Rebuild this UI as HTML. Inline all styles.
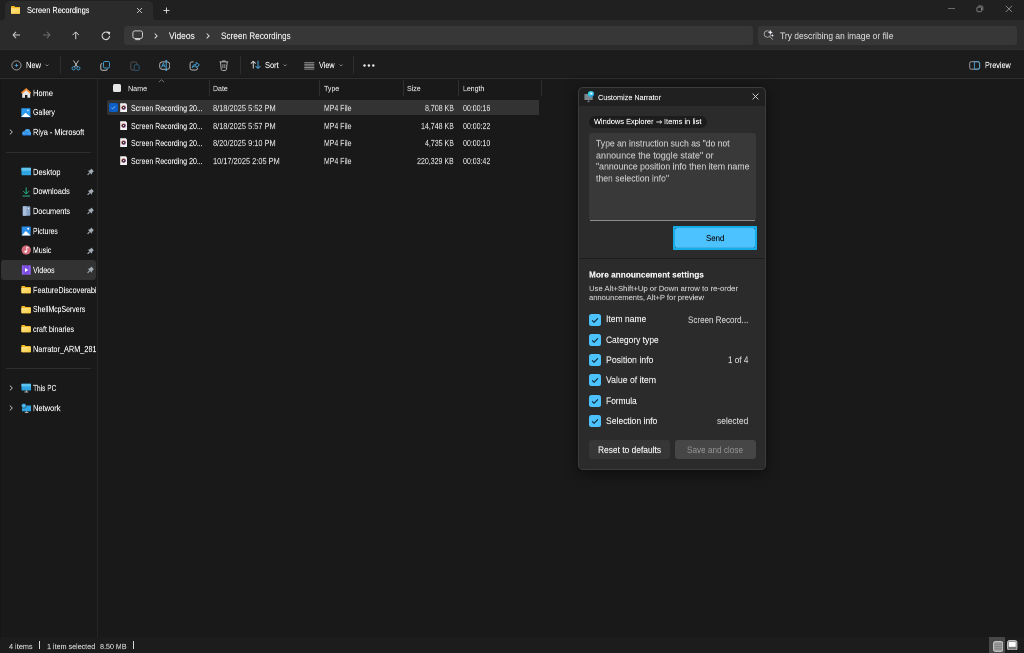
<!DOCTYPE html>
<html><head><meta charset="utf-8"><title>Screen Recordings - File Explorer</title>
<style>
html,body{margin:0;padding:0;width:1024px;height:653px;overflow:hidden;background:#191919;}
body{position:relative;font-family:"Liberation Sans",sans-serif;}
.r{position:absolute;display:block;}
.t{position:absolute;white-space:nowrap;line-height:normal;transform-origin:0 0;will-change:transform;-webkit-text-stroke:0.3px currentColor;}
</style></head><body>
<div class="r" style="left:0px;top:0px;width:1024px;height:50px;background:#2b2b2b;"></div>
<div class="r" style="left:0px;top:0px;width:1024px;height:8px;background:#202020;"></div>
<div class="r" style="left:4.8px;top:0.5px;width:148.2px;height:19.5px;background:#2b2b2b;border-radius:5px 5px 0 0;"></div>
<div class="r" style="left:0px;top:0px;width:4.8px;height:19.5px;background:#202020;border-radius:0 0 3.5px 0;"></div>
<div class="r" style="left:153px;top:0px;width:871px;height:19.5px;background:#202020;border-radius:0 0 0 3.5px;"></div>
<div class="r" style="left:123.8px;top:25.5px;width:629.2px;height:19.799999999999997px;background:#373737;border-radius:3px;"></div>
<div class="r" style="left:758px;top:25.5px;width:259.29999999999995px;height:19.700000000000003px;background:#373737;border-radius:3px;"></div>
<div class="r" style="left:0px;top:48.6px;width:1024px;height:1.6000000000000014px;background:#2f2f2f;"></div>
<div class="r" style="left:0px;top:50.2px;width:1024px;height:27.299999999999997px;background:#1c1c1c;"></div>
<div class="r" style="left:0px;top:77.5px;width:1024px;height:1.0px;background:#2e2e2e;"></div>
<div class="r" style="left:0px;top:78.5px;width:1024px;height:558.5px;background:#191919;"></div>
<div class="r" style="left:97px;top:78.5px;width:1px;height:558.5px;background:#262626;"></div>
<div class="r" style="left:0px;top:78.5px;width:1px;height:558.5px;background:#151515;"></div>
<div class="r" style="left:0px;top:637px;width:1024px;height:16px;background:#1c1c1c;"></div>
<svg class="r" style="left:10.7px;top:5.8px;" width="9.6" height="8" viewBox="0 0 9.6 8"><defs><linearGradient id="fg" x1="0" y1="0" x2="1" y2="1"><stop offset="0" stop-color="#fde48a"/><stop offset="1" stop-color="#f9cd45"/></linearGradient></defs><path d="M0 0.8 Q0 0.1 0.7 0.1 H3.2 L4.3 1.1 H8.8 Q9.4 1.1 9.4 1.8 V7.2 Q9.4 7.8 8.8 7.8 H0.7 Q0 7.8 0 7.2Z" fill="#f4b824"/><path d="M0 2.2 H9.4 V7.2 Q9.4 7.8 8.8 7.8 H0.7 Q0 7.8 0 7.2Z" fill="url(#fg)"/></svg>
<div class="t" style="left:26.60px;top:6.10px;font-size:15.698px;color:#f5f5f5;font-weight:400;transform:scale(0.4682,0.5);">Screen Recordings</div>
<svg class="r" style="left:136px;top:7px;" width="7" height="7" viewBox="0 0 7 7"><path d="M1 1 L6 6 M6 1 L1 6" stroke="#d0d0d0" stroke-width="0.9"/></svg>
<svg class="r" style="left:163px;top:7px;" width="7" height="7" viewBox="0 0 7 7"><path d="M3.5 0.5 V6.5 M0.5 3.5 H6.5" stroke="#e0e0e0" stroke-width="0.9"/></svg>
<div class="r" style="left:948.3px;top:8.2px;width:6.5px;height:0.8000000000000007px;background:#6a6a6a;"></div>
<svg class="r" style="left:976px;top:5px;" width="8" height="8" viewBox="0 0 8 8"><rect x="0.9" y="2.1" width="4.6" height="4.6" rx="0.9" fill="none" stroke="#8a8a8a" stroke-width="0.9"/><path d="M2.2 1.0 H5.6 Q6.8 1.0 6.8 2.2 V5.4" fill="none" stroke="#8a8a8a" stroke-width="0.9"/></svg>
<svg class="r" style="left:1005px;top:5px;" width="8" height="8" viewBox="0 0 8 8"><path d="M0.8 0.8 L7.0 7.0 M7.0 0.8 L0.8 7.0" stroke="#9a9a9a" stroke-width="0.85"/></svg>
<svg class="r" style="left:12.3px;top:31px;" width="9" height="8" viewBox="0 0 9 8"><path d="M0.9 4 H8 M0.9 4 L4.1 0.8 M0.9 4 L4.1 7.2" stroke="#cfcfcf" stroke-width="1.05" fill="none"/></svg>
<svg class="r" style="left:42px;top:31px;transform:scaleX(-1);" width="9" height="8" viewBox="0 0 9 8"><path d="M0.9 4 H8 M0.9 4 L4.1 0.8 M0.9 4 L4.1 7.2" stroke="#6e6e6e" stroke-width="1.05" fill="none"/></svg>
<svg class="r" style="left:71.6px;top:31px;" width="8" height="8.5" viewBox="0 0 8 8.5"><path d="M3.75 8.2 V1 M3.75 0.9 L0.6 4.1 M3.75 0.9 L6.9 4.1" stroke="#d4d4d4" stroke-width="1" fill="none"/></svg>
<svg class="r" style="left:100.5px;top:30.5px;" width="10" height="10" viewBox="0 0 10 10"><path d="M8.6 4.9 A3.75 3.75 0 1 1 6.9 1.7" stroke="#d8d8d8" stroke-width="1.05" fill="none"/><path d="M5.6 0.4 L9.3 0.9 L8.4 4.3Z" fill="#d8d8d8"/></svg>
<svg class="r" style="left:131.5px;top:29.5px;" width="11.5" height="11" viewBox="0 0 11.5 11"><rect x="0.9" y="0.9" width="9.6" height="7.6" rx="1.9" fill="none" stroke="#cdcdcd" stroke-width="1"/><path d="M3.2 9.6 H8.2" stroke="#cdcdcd" stroke-width="1.1"/></svg>
<svg class="r" style="left:153.6px;top:32.7px;" width="4" height="6" viewBox="0 0 4 6"><path d="M0.7 0.5 L3.1 2.9 L0.7 5.3" stroke="#d8d8d8" stroke-width="1.05" fill="none"/></svg>
<div class="t" style="left:169.40px;top:30.58px;font-size:17.733px;color:#ebebeb;font-weight:400;transform:scale(0.4786,0.5);">Videos</div>
<svg class="r" style="left:205.8px;top:32.7px;" width="4" height="6" viewBox="0 0 4 6"><path d="M0.7 0.5 L3.1 2.9 L0.7 5.3" stroke="#d8d8d8" stroke-width="1.05" fill="none"/></svg>
<div class="t" style="left:220.80px;top:30.58px;font-size:17.733px;color:#ebebeb;font-weight:400;transform:scale(0.4629,0.5);">Screen Recordings</div>
<svg class="r" style="left:762px;top:28px;" width="13" height="13" viewBox="0 0 13 13"><circle cx="5.4" cy="6" r="3.3" fill="none" stroke="#a8a8a8" stroke-width="1"/><path d="M7.7 8.5 L10.9 11.7" stroke="#a8a8a8" stroke-width="1"/><path d="M8.4 1.6 L9.2 3.6 L11.1 4.4 L9.2 5.2 L8.4 7.2 L7.6 5.2 L5.7 4.4 L7.6 3.6Z" fill="#f4f0ff" stroke="#333" stroke-width="0.3"/><path d="M10.4 6.0 L10.85 7.05 L11.9 7.5 L10.85 7.95 L10.4 9.0 L9.95 7.95 L8.9 7.5 L9.95 7.05Z" fill="#ece8f8"/></svg>
<div class="t" style="left:780.30px;top:30.51px;font-size:17.442px;color:#c8c8c8;font-weight:400;transform:scale(0.4867,0.5);">Try describing an image or file</div>
<svg class="r" style="left:10.5px;top:59.5px;" width="11" height="11" viewBox="0 0 11 11"><circle cx="5.45" cy="5.4" r="4.6" fill="none" stroke="#c4c4c4" stroke-width="0.75"/><path d="M5.45 3.3 L6 4.85 L7.55 5.4 L6 5.95 L5.45 7.5 L4.9 5.95 L3.35 5.4 L4.9 4.85Z" fill="#4aa8e0"/></svg>
<div class="t" style="left:25.90px;top:60.87px;font-size:15.988px;color:#ebebeb;font-weight:400;transform:scale(0.4684,0.5);">New</div>
<svg class="r" style="left:45.0px;top:64.0px;" width="4" height="3" viewBox="0 0 4 3"><path d="M0.5 0.5 L2 2 L3.5 0.5" stroke="#a8a8a8" stroke-width="0.7" fill="none"/></svg>
<div class="r" style="left:59.5px;top:56px;width:0.7999999999999972px;height:18px;background:#2e2e2e;"></div>
<svg class="r" style="left:71px;top:60px;" width="10" height="11" viewBox="0 0 10 11"><path d="M2.5 0.5 L6.5 7 M7.5 0.5 L3.5 7" stroke="#cfcfcf" stroke-width="0.9" fill="none"/><circle cx="2.6" cy="8.3" r="1.6" fill="none" stroke="#4aa8e0" stroke-width="0.9"/><circle cx="7.4" cy="8.3" r="1.6" fill="none" stroke="#4aa8e0" stroke-width="0.9"/></svg>
<svg class="r" style="left:100px;top:60.5px;" width="11" height="10" viewBox="0 0 11 10"><rect x="3.5" y="0.5" width="6" height="6.5" rx="1.2" fill="none" stroke="#4aa8e0" stroke-width="0.9"/><path d="M2.2 2.5 Q0.8 2.5 0.8 3.8 V8 Q0.8 9.3 2.2 9.3 H6 Q7.3 9.3 7.3 8" fill="none" stroke="#cfcfcf" stroke-width="0.9"/></svg>
<svg class="r" style="left:130px;top:60.5px;" width="10" height="10" viewBox="0 0 10 10"><rect x="0.8" y="1" width="6" height="8" rx="1" fill="none" stroke="#555" stroke-width="0.9"/><rect x="4.3" y="3.8" width="4.8" height="5.6" rx="0.8" fill="#1c1c1c" stroke="#2f5d7c" stroke-width="0.9"/></svg>
<svg class="r" style="left:159px;top:59.5px;" width="11" height="11.5" viewBox="0 0 11 11.5"><rect x="0.7" y="1.9" width="10" height="7.4" rx="2.4" fill="none" stroke="#bdbdbd" stroke-width="0.95"/><path d="M2.6 7.3 L4.4 3.2 L6.1 7.3 M3.3 5.9 H5.4" stroke="#4aa8e0" stroke-width="0.9" fill="none"/><path d="M7.2 0.6 V10.9" stroke="#4aa8e0" stroke-width="1"/><path d="M6.2 0.6 H8.2 M6.2 10.9 H8.2" stroke="#4aa8e0" stroke-width="0.8"/></svg>
<svg class="r" style="left:188.5px;top:60px;" width="11.5" height="11" viewBox="0 0 11.5 11"><path d="M4.6 1.9 H2.9 Q1.1 1.9 1.1 3.7 V8.2 Q1.1 10 2.9 10 H6.8 Q8.6 10 8.6 8.2 V7.6" fill="none" stroke="#bdbdbd" stroke-width="0.95"/><path d="M3.2 7.6 Q3.4 4.4 7.2 4.3 V2.3 L10.4 4.9 L7.2 7.5 V5.8 Q5 5.8 3.2 7.6Z" fill="none" stroke="#4aa8e0" stroke-width="0.9" stroke-linejoin="round"/></svg>
<svg class="r" style="left:218.6px;top:59.6px;" width="10" height="11.2" viewBox="0 0 10 11.2"><path d="M0.5 1.9 H9.2 M3.4 1.9 V0.9 H6.3 V1.9" stroke="#bdbdbd" stroke-width="0.9" fill="none"/><path d="M1.5 1.9 L2.2 9.3 Q2.4 10.5 3.6 10.5 H6.1 Q7.3 10.5 7.5 9.3 L8.2 1.9" stroke="#bdbdbd" stroke-width="0.9" fill="none"/><path d="M3.9 4.2 V8.2 M5.8 4.2 V8.2" stroke="#bdbdbd" stroke-width="0.8"/></svg>
<div class="r" style="left:240px;top:56px;width:0.8000000000000114px;height:18px;background:#2e2e2e;"></div>
<svg class="r" style="left:249.5px;top:60.3px;" width="12" height="9.5" viewBox="0 0 12 9.5"><path d="M3.3 8.4 V1.3 M3.3 1.2 L0.9 3.6 M3.3 1.2 L5.7 3.6" stroke="#c8c8c8" stroke-width="1.05" fill="none"/><path d="M8.0 0.7 V8.4 M8.0 8.5 L5.5 6.0 M8.0 8.5 L10.5 6.0" stroke="#4aa0d8" stroke-width="1.05" fill="none"/></svg>
<div class="t" style="left:265.00px;top:60.97px;font-size:15.988px;color:#ebebeb;font-weight:400;transform:scale(0.4672,0.5);">Sort</div>
<svg class="r" style="left:282.9px;top:64.0px;" width="4" height="3" viewBox="0 0 4 3"><path d="M0.5 0.5 L2 2 L3.5 0.5" stroke="#a8a8a8" stroke-width="0.7" fill="none"/></svg>
<svg class="r" style="left:303.8px;top:61.5px;" width="11" height="8" viewBox="0 0 11 8"><path d="M0.3 0.7 H10.3 M0.3 2.3 H10.3 M0.3 3.9 H10.3 M0.3 5.5 H10.3 M0.3 7.1 H10.3" stroke="#b4b4b4" stroke-width="0.75"/></svg>
<div class="t" style="left:319.20px;top:60.97px;font-size:15.988px;color:#ebebeb;font-weight:400;transform:scale(0.4534,0.5);">View</div>
<svg class="r" style="left:338.8px;top:64.0px;" width="4" height="3" viewBox="0 0 4 3"><path d="M0.5 0.5 L2 2 L3.5 0.5" stroke="#a8a8a8" stroke-width="0.7" fill="none"/></svg>
<div class="r" style="left:353.0px;top:56px;width:0.8000000000000114px;height:18px;background:#2e2e2e;"></div>
<svg class="r" style="left:363.3px;top:64.0px;" width="12" height="3" viewBox="0 0 12 3"><circle cx="1.5" cy="1.5" r="1.2" fill="#ececec"/><circle cx="5.9" cy="1.5" r="1.2" fill="#ececec"/><circle cx="10.3" cy="1.5" r="1.2" fill="#ececec"/></svg>
<svg class="r" style="left:969.2px;top:60.6px;" width="12" height="9" viewBox="0 0 12 9"><rect x="0.7" y="0.7" width="9.9" height="7.5" rx="1.6" fill="none" stroke="#a8a8a8" stroke-width="0.9"/><path d="M5.4 0.7 V8.2" stroke="#4aa0d8" stroke-width="0.9"/><path d="M5.4 0.7 H9.0 Q10.6 0.7 10.6 2.3 V6.6 Q10.6 8.2 9.0 8.2 H5.4" fill="none" stroke="#4aa0d8" stroke-width="0.9"/></svg>
<div class="t" style="left:984.60px;top:60.97px;font-size:15.988px;color:#ebebeb;font-weight:400;transform:scale(0.4533,0.5);">Preview</div>
<div class="r" style="left:1.3px;top:260.1px;width:94.7px;height:19.69999999999999px;background:#323232;border-radius:3px;"></div>
<div class="r" style="left:0;top:83.0px;width:96.3px;height:20px;overflow:hidden;"><div class="t" style="left:32.90px;top:5.80px;font-size:15.698px;color:#ebebeb;font-weight:400;transform:scale(0.4775,0.5);">Home</div></div>
<svg class="r" style="left:20.5px;top:88px;" width="10.5" height="10" viewBox="0 0 10.5 10"><path d="M5.2 1.5 L9.2 5.0 V9.7 H6.4 V7.0 H4.0 V9.7 H1.2 V5.0Z" fill="#e6e6e6"/><path d="M5.2 0.0 L10.4 4.6 L9.3 5.8 L5.2 2.2 L1.1 5.8 L0.0 4.6Z" fill="#f28a2e"/></svg>
<div class="r" style="left:0;top:102.5px;width:96.3px;height:20px;overflow:hidden;"><div class="t" style="left:32.90px;top:5.80px;font-size:15.698px;color:#ebebeb;font-weight:400;transform:scale(0.4404,0.5);">Gallery</div></div>
<svg class="r" style="left:20.5px;top:107.5px;" width="10.5" height="10" viewBox="0 0 10.5 10"><path d="M1.6 9.9 H10.2 V1.4" stroke="#1a5fa8" stroke-width="0.9" fill="none"/><rect x="0.3" y="0.2" width="9.1" height="8.9" rx="0.6" fill="#2d9cf0"/><path d="M0.3 9.1 L4.6 5.0 L9.4 9.1Z" fill="#ffffff"/><path d="M0.3 9.1 L4.6 5.0 L9.4 9.1Z" fill="#ffffff"/><circle cx="6.9" cy="2.4" r="0.8" fill="#e0f0ff"/></svg>
<div class="r" style="left:0;top:122.0px;width:96.3px;height:20px;overflow:hidden;"><div class="t" style="left:32.90px;top:5.80px;font-size:15.698px;color:#ebebeb;font-weight:400;transform:scale(0.4706,0.5);">Riya - Microsoft</div></div>
<svg class="r" style="left:20.5px;top:127px;" width="10.5" height="10" viewBox="0 0 10.5 10"><defs><linearGradient id="od" x1="0" y1="0" x2="0" y2="1"><stop offset="0" stop-color="#56b8fa"/><stop offset="1" stop-color="#1a6fd8"/></linearGradient></defs><g fill="url(#od)"><circle cx="3.2" cy="6.4" r="2.1"/><circle cx="6.4" cy="5.0" r="2.9"/><circle cx="8.7" cy="6.7" r="1.8"/><rect x="1.5" y="6.4" width="8.9" height="2.1" rx="1"/></g></svg>
<svg class="r" style="left:8.5px;top:129px;" width="4.5" height="6" viewBox="0 0 4.5 6"><path d="M0.8 0.6 L3.4 3 L0.8 5.4" stroke="#d8d8d8" stroke-width="0.9" fill="none"/></svg>
<div class="r" style="left:6.3px;top:151.5px;width:84.7px;height:0.8000000000000114px;background:#2e2e2e;"></div>
<div class="r" style="left:0;top:162.0px;width:96.3px;height:20px;overflow:hidden;"><div class="t" style="left:32.90px;top:5.80px;font-size:15.698px;color:#ebebeb;font-weight:400;transform:scale(0.4793,0.5);">Desktop</div></div>
<svg class="r" style="left:20.5px;top:167px;" width="10.5" height="10" viewBox="0 0 10.5 10"><rect x="0.5" y="0.8" width="9.7" height="7.4" rx="0.6" fill="#2ea4e0"/><rect x="0.5" y="0.8" width="9.7" height="3" fill="#5fc3f0"/></svg>
<svg class="r" style="left:87px;top:168.2px;" width="7.5" height="7.5" viewBox="0 0 7.5 7.5"><path d="M4.2 0.6 L6.9 3.3 L5.8 3.9 L4.7 5.9 L5 6.9 L0.6 2.5 L1.6 2.8 L3.6 1.7Z" fill="#a2abb3"/><path d="M2.8 4.7 L0.6 6.9" stroke="#a2abb3" stroke-width="1.1"/></svg>
<div class="r" style="left:0;top:181.6px;width:96.3px;height:20px;overflow:hidden;"><div class="t" style="left:32.90px;top:5.80px;font-size:15.698px;color:#ebebeb;font-weight:400;transform:scale(0.4739,0.5);">Downloads</div></div>
<svg class="r" style="left:20.5px;top:186.6px;" width="10.5" height="10" viewBox="0 0 10.5 10"><path d="M5.2 0.5 V6.8 M2.3 4.1 L5.2 7 L8.1 4.1" stroke="#28b48c" stroke-width="1" fill="none"/><path d="M1.5 9 H9" stroke="#28b48c" stroke-width="1"/></svg>
<svg class="r" style="left:87px;top:187.79999999999998px;" width="7.5" height="7.5" viewBox="0 0 7.5 7.5"><path d="M4.2 0.6 L6.9 3.3 L5.8 3.9 L4.7 5.9 L5 6.9 L0.6 2.5 L1.6 2.8 L3.6 1.7Z" fill="#a2abb3"/><path d="M2.8 4.7 L0.6 6.9" stroke="#a2abb3" stroke-width="1.1"/></svg>
<div class="r" style="left:0;top:201.2px;width:96.3px;height:20px;overflow:hidden;"><div class="t" style="left:32.90px;top:5.80px;font-size:15.698px;color:#ebebeb;font-weight:400;transform:scale(0.4660,0.5);">Documents</div></div>
<svg class="r" style="left:20.5px;top:206.2px;" width="10.5" height="10" viewBox="0 0 10.5 10"><rect x="1.8" y="0.3" width="7.5" height="9.4" rx="0.8" fill="#8aa3c8"/><rect x="1.8" y="0.3" width="3.6" height="9.4" fill="#a9bedb"/><circle cx="7.5" cy="2.5" r="0.6" fill="#fff"/></svg>
<svg class="r" style="left:87px;top:207.39999999999998px;" width="7.5" height="7.5" viewBox="0 0 7.5 7.5"><path d="M4.2 0.6 L6.9 3.3 L5.8 3.9 L4.7 5.9 L5 6.9 L0.6 2.5 L1.6 2.8 L3.6 1.7Z" fill="#a2abb3"/><path d="M2.8 4.7 L0.6 6.9" stroke="#a2abb3" stroke-width="1.1"/></svg>
<div class="r" style="left:0;top:220.8px;width:96.3px;height:20px;overflow:hidden;"><div class="t" style="left:32.90px;top:5.80px;font-size:15.698px;color:#ebebeb;font-weight:400;transform:scale(0.4374,0.5);">Pictures</div></div>
<svg class="r" style="left:20.5px;top:225.8px;" width="10.5" height="10" viewBox="0 0 10.5 10"><rect x="0.7" y="0.5" width="9" height="9" rx="0.8" fill="#2a8ee8"/><path d="M0.7 9.5 L4.8 5 L9.7 9.5Z" fill="#fff"/><circle cx="7.2" cy="2.8" r="1" fill="#fff"/></svg>
<svg class="r" style="left:87px;top:227.0px;" width="7.5" height="7.5" viewBox="0 0 7.5 7.5"><path d="M4.2 0.6 L6.9 3.3 L5.8 3.9 L4.7 5.9 L5 6.9 L0.6 2.5 L1.6 2.8 L3.6 1.7Z" fill="#a2abb3"/><path d="M2.8 4.7 L0.6 6.9" stroke="#a2abb3" stroke-width="1.1"/></svg>
<div class="r" style="left:0;top:240.4px;width:96.3px;height:20px;overflow:hidden;"><div class="t" style="left:32.90px;top:5.80px;font-size:15.698px;color:#ebebeb;font-weight:400;transform:scale(0.4465,0.5);">Music</div></div>
<svg class="r" style="left:20.5px;top:245.4px;" width="10.5" height="10" viewBox="0 0 10.5 10"><circle cx="5.2" cy="5" r="4.6" fill="#e07060"/><circle cx="5.2" cy="5" r="4.6" fill="#c86aa0" opacity="0.45"/><path d="M5.8 2 V6.5 M5.8 2 L7.5 2.8" stroke="#fff" stroke-width="0.9"/><circle cx="4.7" cy="6.6" r="1.2" fill="#fff"/></svg>
<svg class="r" style="left:87px;top:246.6px;" width="7.5" height="7.5" viewBox="0 0 7.5 7.5"><path d="M4.2 0.6 L6.9 3.3 L5.8 3.9 L4.7 5.9 L5 6.9 L0.6 2.5 L1.6 2.8 L3.6 1.7Z" fill="#a2abb3"/><path d="M2.8 4.7 L0.6 6.9" stroke="#a2abb3" stroke-width="1.1"/></svg>
<div class="r" style="left:0;top:260.1px;width:96.3px;height:20px;overflow:hidden;"><div class="t" style="left:32.90px;top:5.80px;font-size:15.698px;color:#ebebeb;font-weight:400;transform:scale(0.4547,0.5);">Videos</div></div>
<svg class="r" style="left:20.5px;top:265.1px;" width="10.5" height="10" viewBox="0 0 10.5 10"><rect x="0.8" y="0.3" width="9" height="9.4" rx="0.8" fill="#7c4ee0"/><path d="M4 3 L7.2 5 L4 7Z" fill="#fff"/><path d="M1.8 0.3 V9.7 M8.8 0.3 V9.7" stroke="#a57df0" stroke-width="0.6"/></svg>
<svg class="r" style="left:87px;top:266.3px;" width="7.5" height="7.5" viewBox="0 0 7.5 7.5"><path d="M4.2 0.6 L6.9 3.3 L5.8 3.9 L4.7 5.9 L5 6.9 L0.6 2.5 L1.6 2.8 L3.6 1.7Z" fill="#a2abb3"/><path d="M2.8 4.7 L0.6 6.9" stroke="#a2abb3" stroke-width="1.1"/></svg>
<div class="r" style="left:0;top:279.8px;width:96.3px;height:20px;overflow:hidden;"><div class="t" style="left:32.90px;top:5.80px;font-size:15.698px;color:#ebebeb;font-weight:400;transform:scale(0.4675,0.5);">FeatureDiscoverability</div></div>
<svg class="r" style="left:20.5px;top:284.8px;" width="10.5" height="10" viewBox="0 0 10.5 10"><path d="M0.4 1.6 Q0.4 0.9 1.1 0.9 H3.6 L4.7 1.9 H9.2 Q9.8 1.9 9.8 2.6 V7.6 Q9.8 8.2 9.2 8.2 H1.1 Q0.4 8.2 0.4 7.6Z" fill="#f4b824"/><path d="M0.4 3.0 H9.8 V7.6 Q9.8 8.2 9.2 8.2 H1.1 Q0.4 8.2 0.4 7.6Z" fill="url(#fg)"/></svg>
<div class="r" style="left:0;top:299.5px;width:96.3px;height:20px;overflow:hidden;"><div class="t" style="left:32.90px;top:5.80px;font-size:15.698px;color:#ebebeb;font-weight:400;transform:scale(0.4408,0.5);">ShellMcpServers</div></div>
<svg class="r" style="left:20.5px;top:304.5px;" width="10.5" height="10" viewBox="0 0 10.5 10"><path d="M0.4 1.6 Q0.4 0.9 1.1 0.9 H3.6 L4.7 1.9 H9.2 Q9.8 1.9 9.8 2.6 V7.6 Q9.8 8.2 9.2 8.2 H1.1 Q0.4 8.2 0.4 7.6Z" fill="#f4b824"/><path d="M0.4 3.0 H9.8 V7.6 Q9.8 8.2 9.2 8.2 H1.1 Q0.4 8.2 0.4 7.6Z" fill="url(#fg)"/></svg>
<div class="r" style="left:0;top:319.3px;width:96.3px;height:20px;overflow:hidden;"><div class="t" style="left:32.90px;top:5.80px;font-size:15.698px;color:#ebebeb;font-weight:400;transform:scale(0.4562,0.5);">craft binaries</div></div>
<svg class="r" style="left:20.5px;top:324.3px;" width="10.5" height="10" viewBox="0 0 10.5 10"><path d="M0.4 1.6 Q0.4 0.9 1.1 0.9 H3.6 L4.7 1.9 H9.2 Q9.8 1.9 9.8 2.6 V7.6 Q9.8 8.2 9.2 8.2 H1.1 Q0.4 8.2 0.4 7.6Z" fill="#f4b824"/><path d="M0.4 3.0 H9.8 V7.6 Q9.8 8.2 9.2 8.2 H1.1 Q0.4 8.2 0.4 7.6Z" fill="url(#fg)"/></svg>
<div class="r" style="left:0;top:339.1px;width:96.3px;height:20px;overflow:hidden;"><div class="t" style="left:32.90px;top:5.80px;font-size:15.698px;color:#ebebeb;font-weight:400;transform:scale(0.4675,0.5);">Narrator_ARM_28117</div></div>
<svg class="r" style="left:20.5px;top:344.1px;" width="10.5" height="10" viewBox="0 0 10.5 10"><path d="M0.4 1.6 Q0.4 0.9 1.1 0.9 H3.6 L4.7 1.9 H9.2 Q9.8 1.9 9.8 2.6 V7.6 Q9.8 8.2 9.2 8.2 H1.1 Q0.4 8.2 0.4 7.6Z" fill="#f4b824"/><path d="M0.4 3.0 H9.8 V7.6 Q9.8 8.2 9.2 8.2 H1.1 Q0.4 8.2 0.4 7.6Z" fill="url(#fg)"/></svg>
<div class="r" style="left:6.3px;top:368.2px;width:84.7px;height:0.8000000000000114px;background:#2e2e2e;"></div>
<div class="r" style="left:0;top:378.0px;width:96.3px;height:20px;overflow:hidden;"><div class="t" style="left:32.90px;top:5.80px;font-size:15.698px;color:#ebebeb;font-weight:400;transform:scale(0.4174,0.5);">This PC</div></div>
<svg class="r" style="left:20.5px;top:383px;" width="10.5" height="10" viewBox="0 0 10.5 10"><rect x="0.5" y="0.8" width="9.7" height="6.6" rx="0.6" fill="#2ea4e0"/><rect x="0.5" y="0.8" width="9.7" height="2.7" fill="#5fc3f0"/><path d="M3.5 9 H7.2 M5.3 7.4 V9" stroke="#ccc" stroke-width="0.9"/></svg>
<svg class="r" style="left:8.5px;top:385px;" width="4.5" height="6" viewBox="0 0 4.5 6"><path d="M0.8 0.6 L3.4 3 L0.8 5.4" stroke="#d8d8d8" stroke-width="0.9" fill="none"/></svg>
<div class="r" style="left:0;top:398.0px;width:96.3px;height:20px;overflow:hidden;"><div class="t" style="left:32.90px;top:5.80px;font-size:15.698px;color:#ebebeb;font-weight:400;transform:scale(0.4773,0.5);">Network</div></div>
<svg class="r" style="left:20.5px;top:403px;" width="10.5" height="10" viewBox="0 0 10.5 10"><rect x="1" y="2.5" width="9.2" height="5.8" rx="0.6" fill="#2ea4e0"/><path d="M3.8 9.4 H7.4 M5.6 8.3 V9.4" stroke="#ccc" stroke-width="0.9"/><circle cx="2.8" cy="2.8" r="2.4" fill="#4ab8f0" stroke="#1a1a1a" stroke-width="0.5"/></svg>
<svg class="r" style="left:8.5px;top:405px;" width="4.5" height="6" viewBox="0 0 4.5 6"><path d="M0.8 0.6 L3.4 3 L0.8 5.4" stroke="#d8d8d8" stroke-width="0.9" fill="none"/></svg>
<svg class="r" style="left:158px;top:78.5px;" width="7" height="4" viewBox="0 0 7 4"><path d="M0.8 3.2 L3.5 0.8 L6.2 3.2" stroke="#9a9a9a" stroke-width="0.7" fill="none"/></svg>
<div class="r" style="left:113px;top:84px;width:8.200000000000003px;height:7.599999999999994px;background:#e6e6e6;border-radius:1.5px;"></div>
<div class="r" style="left:208.6px;top:79.5px;width:0.8000000000000114px;height:16.099999999999994px;background:#2f2f2f;"></div>
<div class="r" style="left:319.1px;top:79.5px;width:0.7999999999999545px;height:16.099999999999994px;background:#2f2f2f;"></div>
<div class="r" style="left:402.90000000000003px;top:79.5px;width:0.7999999999999545px;height:16.099999999999994px;background:#2f2f2f;"></div>
<div class="r" style="left:458.0px;top:79.5px;width:0.7999999999999545px;height:16.099999999999994px;background:#2f2f2f;"></div>
<div class="r" style="left:541.0px;top:79.5px;width:0.7999999999999545px;height:16.099999999999994px;background:#2f2f2f;"></div>
<div class="t" style="left:127.80px;top:83.83px;font-size:15.407px;color:#d4d4d4;font-weight:400;transform:scale(0.4647,0.5);">Name</div>
<div class="t" style="left:213.40px;top:83.83px;font-size:15.407px;color:#d4d4d4;font-weight:400;transform:scale(0.4518,0.5);">Date</div>
<div class="t" style="left:324.10px;top:83.83px;font-size:15.407px;color:#d4d4d4;font-weight:400;transform:scale(0.4550,0.5);">Type</div>
<div class="t" style="left:406.70px;top:83.83px;font-size:15.407px;color:#d4d4d4;font-weight:400;transform:scale(0.4550,0.5);">Size</div>
<div class="t" style="left:462.80px;top:83.83px;font-size:15.407px;color:#d4d4d4;font-weight:400;transform:scale(0.4519,0.5);">Length</div>
<div class="r" style="left:107.2px;top:100px;width:432.2px;height:14.799999999999997px;background:#333333;border-radius:2px 0 0 2px;"></div>
<div class="r" style="left:109.4px;top:103.0px;width:8.599999999999994px;height:8.900000000000006px;background:#0b5fc7;border-radius:1.8px;"></div>
<svg class="r" style="left:109.4px;top:103.0px;" width="8.6" height="8.9" viewBox="0 0 8.6 8.9"><path d="M2.4 4.9 L3.7 5.6 L6.4 3.3" stroke="#b8d4f4" stroke-width="0.75" fill="none"/></svg>
<svg class="r" style="left:120px;top:102.9px;" width="7.2" height="9.3" viewBox="0 0 7.2 9.3"><defs><linearGradient id="rg" x1="0" y1="0" x2="1" y2="1"><stop offset="0" stop-color="#f0a070"/><stop offset="0.5" stop-color="#c05080"/><stop offset="1" stop-color="#6040b0"/></linearGradient></defs><path d="M0.2 0.2 H5.8 L7 1.4 V9.1 H0.2Z" fill="#f4f4f4"/><circle cx="3.55" cy="4.6" r="2.45" fill="url(#rg)"/><circle cx="3.55" cy="4.6" r="1.7" fill="#262626"/><path d="M3.0 3.7 L4.6 4.6 L3.0 5.5Z" fill="#f0f0f0"/></svg>
<div class="t" style="left:131.30px;top:104.10px;font-size:15.698px;color:#e8e8e8;font-weight:400;transform:scale(0.4466,0.5);">Screen Recording 20...</div>
<div class="t" style="left:213.40px;top:104.10px;font-size:15.698px;color:#d0d0d0;font-weight:400;transform:scale(0.4725,0.5);">8/18/2025 5:52 PM</div>
<div class="t" style="left:324.10px;top:104.10px;font-size:15.698px;color:#d0d0d0;font-weight:400;transform:scale(0.4425,0.5);">MP4 File</div>
<div class="t" style="left:425.14px;top:104.10px;font-size:15.698px;color:#d0d0d0;font-weight:400;transform:scale(0.4485,0.5);">8,708 KB</div>
<div class="t" style="left:462.80px;top:104.10px;font-size:15.698px;color:#d0d0d0;font-weight:400;transform:scale(0.4467,0.5);">00:00:16</div>
<svg class="r" style="left:120px;top:120.50000000000001px;" width="7.2" height="9.3" viewBox="0 0 7.2 9.3"><defs><linearGradient id="rg" x1="0" y1="0" x2="1" y2="1"><stop offset="0" stop-color="#f0a070"/><stop offset="0.5" stop-color="#c05080"/><stop offset="1" stop-color="#6040b0"/></linearGradient></defs><path d="M0.2 0.2 H5.8 L7 1.4 V9.1 H0.2Z" fill="#f4f4f4"/><circle cx="3.55" cy="4.6" r="2.45" fill="url(#rg)"/><circle cx="3.55" cy="4.6" r="1.7" fill="#262626"/><path d="M3.0 3.7 L4.6 4.6 L3.0 5.5Z" fill="#f0f0f0"/></svg>
<div class="t" style="left:131.30px;top:121.70px;font-size:15.698px;color:#e8e8e8;font-weight:400;transform:scale(0.4466,0.5);">Screen Recording 20...</div>
<div class="t" style="left:213.40px;top:121.70px;font-size:15.698px;color:#d0d0d0;font-weight:400;transform:scale(0.4725,0.5);">8/18/2025 5:57 PM</div>
<div class="t" style="left:324.10px;top:121.70px;font-size:15.698px;color:#d0d0d0;font-weight:400;transform:scale(0.4425,0.5);">MP4 File</div>
<div class="t" style="left:421.22px;top:121.70px;font-size:15.698px;color:#d0d0d0;font-weight:400;transform:scale(0.4485,0.5);">14,748 KB</div>
<div class="t" style="left:462.80px;top:121.70px;font-size:15.698px;color:#d0d0d0;font-weight:400;transform:scale(0.4467,0.5);">00:00:22</div>
<svg class="r" style="left:120px;top:138.10000000000002px;" width="7.2" height="9.3" viewBox="0 0 7.2 9.3"><defs><linearGradient id="rg" x1="0" y1="0" x2="1" y2="1"><stop offset="0" stop-color="#f0a070"/><stop offset="0.5" stop-color="#c05080"/><stop offset="1" stop-color="#6040b0"/></linearGradient></defs><path d="M0.2 0.2 H5.8 L7 1.4 V9.1 H0.2Z" fill="#f4f4f4"/><circle cx="3.55" cy="4.6" r="2.45" fill="url(#rg)"/><circle cx="3.55" cy="4.6" r="1.7" fill="#262626"/><path d="M3.0 3.7 L4.6 4.6 L3.0 5.5Z" fill="#f0f0f0"/></svg>
<div class="t" style="left:131.30px;top:139.30px;font-size:15.698px;color:#e8e8e8;font-weight:400;transform:scale(0.4466,0.5);">Screen Recording 20...</div>
<div class="t" style="left:213.40px;top:139.30px;font-size:15.698px;color:#d0d0d0;font-weight:400;transform:scale(0.4725,0.5);">8/20/2025 9:10 PM</div>
<div class="t" style="left:324.10px;top:139.30px;font-size:15.698px;color:#d0d0d0;font-weight:400;transform:scale(0.4425,0.5);">MP4 File</div>
<div class="t" style="left:425.14px;top:139.30px;font-size:15.698px;color:#d0d0d0;font-weight:400;transform:scale(0.4485,0.5);">4,735 KB</div>
<div class="t" style="left:462.80px;top:139.30px;font-size:15.698px;color:#d0d0d0;font-weight:400;transform:scale(0.4467,0.5);">00:00:10</div>
<svg class="r" style="left:120px;top:155.70000000000002px;" width="7.2" height="9.3" viewBox="0 0 7.2 9.3"><defs><linearGradient id="rg" x1="0" y1="0" x2="1" y2="1"><stop offset="0" stop-color="#f0a070"/><stop offset="0.5" stop-color="#c05080"/><stop offset="1" stop-color="#6040b0"/></linearGradient></defs><path d="M0.2 0.2 H5.8 L7 1.4 V9.1 H0.2Z" fill="#f4f4f4"/><circle cx="3.55" cy="4.6" r="2.45" fill="url(#rg)"/><circle cx="3.55" cy="4.6" r="1.7" fill="#262626"/><path d="M3.0 3.7 L4.6 4.6 L3.0 5.5Z" fill="#f0f0f0"/></svg>
<div class="t" style="left:131.30px;top:156.90px;font-size:15.698px;color:#e8e8e8;font-weight:400;transform:scale(0.4466,0.5);">Screen Recording 20...</div>
<div class="t" style="left:213.40px;top:156.90px;font-size:15.698px;color:#d0d0d0;font-weight:400;transform:scale(0.4725,0.5);">10/17/2025 2:05 PM</div>
<div class="t" style="left:324.10px;top:156.90px;font-size:15.698px;color:#d0d0d0;font-weight:400;transform:scale(0.4425,0.5);">MP4 File</div>
<div class="t" style="left:417.30px;top:156.90px;font-size:15.698px;color:#d0d0d0;font-weight:400;transform:scale(0.4485,0.5);">220,329 KB</div>
<div class="t" style="left:462.80px;top:156.90px;font-size:15.698px;color:#d0d0d0;font-weight:400;transform:scale(0.4467,0.5);">00:03:42</div>
<div class="t" style="left:8.90px;top:641.66px;font-size:15.116px;color:#cccccc;font-weight:400;transform:scale(0.4844,0.5);">4 items</div>
<div class="r" style="left:39.0px;top:641.2px;width:1.2999999999999972px;height:8.199999999999932px;background:#d8d8d8;"></div>
<div class="t" style="left:47.00px;top:641.66px;font-size:15.116px;color:#cccccc;font-weight:400;transform:scale(0.4741,0.5);">1 item selected</div>
<div class="t" style="left:99.70px;top:641.66px;font-size:15.116px;color:#cccccc;font-weight:400;transform:scale(0.4725,0.5);">8.50 MB</div>
<div class="r" style="left:132.8px;top:641.2px;width:1.299999999999983px;height:8.199999999999932px;background:#d8d8d8;"></div>
<div class="r" style="left:989px;top:637.2px;width:16px;height:15.799999999999955px;background:#474747;"></div>
<svg class="r" style="left:992.5px;top:640.5px;" width="10.5" height="11" viewBox="0 0 10.5 11"><rect x="0.6" y="0.6" width="9.3" height="9.8" rx="1.6" fill="#9a9a9a" stroke="#d6d6d6" stroke-width="0.9"/><path d="M1.5 3.2 H9 M1.5 5.5 H9 M1.5 7.8 H9" stroke="#777" stroke-width="0.6"/></svg>
<svg class="r" style="left:1007.3px;top:639.6px;" width="10.5" height="10.8" viewBox="0 0 10.5 10.8"><rect x="0.6" y="0.6" width="9.3" height="9.6" rx="1.6" fill="#7a7a7a" stroke="#d6d6d6" stroke-width="0.9"/><rect x="1.8" y="1.8" width="6.9" height="5" fill="#ffffff"/></svg>
<div class="r" style="left:578px;top:87px;width:188px;height:383px;background:#2b2b2b;border-radius:5px;box-shadow:0 3px 14px rgba(0,0,0,0.5);"></div>
<div class="r" style="left:578px;top:87px;width:188px;height:19px;background:#202020;border-radius:5px 5px 0 0;"></div>
<div class="r" style="left:578px;top:87px;width:186px;height:381px;border:1px solid #3c3c3c;border-radius:5px;"></div>
<svg class="r" style="left:583.5px;top:90px;" width="11.5" height="12.5" viewBox="0 0 11.5 12.5"><defs><linearGradient id="nb" x1="0" y1="0" x2="1" y2="0.6"><stop offset="0" stop-color="#2ee6cf"/><stop offset="1" stop-color="#1c9ae8"/></linearGradient><radialGradient id="nh" cx="0.55" cy="0.45" r="0.35"><stop offset="0" stop-color="#ffffff"/><stop offset="1" stop-color="#ffffff" stop-opacity="0"/></radialGradient></defs><rect x="0.4" y="4" width="8.3" height="6" rx="0.5" fill="#7b838b"/><path d="M3.4 11.7 H5.8 M4.6 10 V11.7" stroke="#6c737a" stroke-width="1"/><ellipse cx="7.0" cy="3.9" rx="3.1" ry="2.8" fill="url(#nb)"/><path d="M6.2 6.3 L7.8 6.3 L6.9 7.4Z" fill="#1ca6e0"/><ellipse cx="7.0" cy="3.9" rx="3.1" ry="2.8" fill="url(#nh)"/></svg>
<div class="t" style="left:598.00px;top:92.63px;font-size:15.407px;color:#ebebeb;font-weight:400;transform:scale(0.4717,0.5);">Customize Narrator</div>
<svg class="r" style="left:751.5px;top:93px;" width="7" height="7" viewBox="0 0 7 7"><path d="M0.6 0.6 L6.4 6.4 M6.4 0.6 L0.6 6.4" stroke="#e0e0e0" stroke-width="0.9"/></svg>
<div class="r" style="left:589px;top:116.2px;width:117.70000000000005px;height:11.700000000000003px;background:#1c1c1c;border-radius:6px;"></div>
<div class="t" style="left:593.80px;top:116.93px;font-size:15.407px;color:#f5f5f5;font-weight:400;transform:scale(0.4793,0.5);">Windows Explorer</div>
<svg class="r" style="left:655.8px;top:119.6px;" width="6.6" height="4" viewBox="0 0 6.6 4"><path d="M0.3 2 H5.6 M3.8 0.4 L5.8 2 L3.8 3.6" stroke="#f0f0f0" stroke-width="0.9" fill="none"/></svg>
<div class="t" style="left:664.40px;top:116.93px;font-size:15.407px;color:#f5f5f5;font-weight:400;transform:scale(0.4867,0.5);">Items in list</div>
<div class="r" style="left:589px;top:133.2px;width:166.5px;height:87.20000000000002px;background:#393939;border-radius:3px 3px 2px 2px;"></div>
<div class="r" style="left:589.5px;top:219.5px;width:165.5px;height:1.0px;background:#8c8c8c;"></div>
<div class="t" style="left:595.90px;top:138.48px;font-size:18.605px;color:#c4c4c4;font-weight:400;transform:scale(0.4627,0.5);">Type an instruction such as "do not</div>
<div class="t" style="left:595.90px;top:149.88px;font-size:18.605px;color:#c4c4c4;font-weight:400;transform:scale(0.4855,0.5);">announce the toggle state" or</div>
<div class="t" style="left:595.90px;top:161.28px;font-size:18.605px;color:#c4c4c4;font-weight:400;transform:scale(0.4706,0.5);">"announce position info then item name</div>
<div class="t" style="left:595.90px;top:172.68px;font-size:18.605px;color:#c4c4c4;font-weight:400;transform:scale(0.4662,0.5);">then selection info"</div>
<div class="r" style="left:672.7px;top:226.2px;width:84.79999999999995px;height:23.700000000000017px;background:#14ade8;border-radius:0.8px;"></div>
<div class="r" style="left:675.0px;top:228.1px;width:80.20000000000005px;height:19.700000000000017px;background:#1d4a60;"></div>
<div class="r" style="left:675.0px;top:228.1px;width:80.20000000000005px;height:19.700000000000017px;background:#4cc2ff;border-radius:2.2px;box-shadow:inset 0 -0.7px 0 #3fa9e0;"></div>
<div class="t" style="left:706.10px;top:233.24px;font-size:17.151px;color:#101418;font-weight:400;transform:scale(0.4570,0.5);">Send</div>
<div class="r" style="left:579px;top:257.5px;width:186px;height:1.1999999999999886px;background:#1c1c1c;"></div>
<div class="t" style="left:588.90px;top:270.17px;font-size:16.860px;color:#f5f5f5;font-weight:700;transform:scale(0.4906,0.5);">More announcement settings</div>
<div class="t" style="left:588.90px;top:283.86px;font-size:15.116px;color:#c4c4c4;font-weight:400;transform:scale(0.5096,0.5);">Use Alt+Shift+Up or Down arrow to re-order</div>
<div class="t" style="left:588.90px;top:293.16px;font-size:15.116px;color:#c4c4c4;font-weight:400;transform:scale(0.5009,0.5);">announcements, Alt+P for preview</div>
<div class="r" style="left:589px;top:313.5px;width:12px;height:12.0px;background:#4cc2ff;border-radius:2.5px;"></div>
<svg class="r" style="left:589px;top:313.5px;" width="12" height="12" viewBox="0 0 12 12"><path d="M3.1 6.4 L5.1 8.3 L8.9 4.4" stroke="#0d1b26" stroke-width="1.1" fill="none"/></svg>
<div class="t" style="left:606.10px;top:314.41px;font-size:17.442px;color:#ebebeb;font-weight:400;transform:scale(0.4879,0.5);">Item name</div>
<div class="t" style="left:687.70px;top:314.81px;font-size:17.442px;color:#c8c8c8;font-weight:400;transform:scale(0.4608,0.5);">Screen Record...</div>
<div class="r" style="left:589px;top:333.8px;width:12px;height:12.0px;background:#4cc2ff;border-radius:2.5px;"></div>
<svg class="r" style="left:589px;top:333.8px;" width="12" height="12" viewBox="0 0 12 12"><path d="M3.1 6.4 L5.1 8.3 L8.9 4.4" stroke="#0d1b26" stroke-width="1.1" fill="none"/></svg>
<div class="t" style="left:606.10px;top:334.71px;font-size:17.442px;color:#ebebeb;font-weight:400;transform:scale(0.4853,0.5);">Category type</div>
<div class="r" style="left:589px;top:354.1px;width:12px;height:12.0px;background:#4cc2ff;border-radius:2.5px;"></div>
<svg class="r" style="left:589px;top:354.1px;" width="12" height="12" viewBox="0 0 12 12"><path d="M3.1 6.4 L5.1 8.3 L8.9 4.4" stroke="#0d1b26" stroke-width="1.1" fill="none"/></svg>
<div class="t" style="left:606.10px;top:355.01px;font-size:17.442px;color:#ebebeb;font-weight:400;transform:scale(0.4988,0.5);">Position info</div>
<div class="t" style="left:727.70px;top:355.41px;font-size:17.442px;color:#c8c8c8;font-weight:400;transform:scale(0.4652,0.5);">1 of 4</div>
<div class="r" style="left:589px;top:374.4px;width:12px;height:12.0px;background:#4cc2ff;border-radius:2.5px;"></div>
<svg class="r" style="left:589px;top:374.4px;" width="12" height="12" viewBox="0 0 12 12"><path d="M3.1 6.4 L5.1 8.3 L8.9 4.4" stroke="#0d1b26" stroke-width="1.1" fill="none"/></svg>
<div class="t" style="left:606.10px;top:375.31px;font-size:17.442px;color:#ebebeb;font-weight:400;transform:scale(0.4975,0.5);">Value of item</div>
<div class="r" style="left:589px;top:394.7px;width:12px;height:12.0px;background:#4cc2ff;border-radius:2.5px;"></div>
<svg class="r" style="left:589px;top:394.7px;" width="12" height="12" viewBox="0 0 12 12"><path d="M3.1 6.4 L5.1 8.3 L8.9 4.4" stroke="#0d1b26" stroke-width="1.1" fill="none"/></svg>
<div class="t" style="left:606.10px;top:395.61px;font-size:17.442px;color:#ebebeb;font-weight:400;transform:scale(0.4799,0.5);">Formula</div>
<div class="r" style="left:589px;top:415.0px;width:12px;height:12.0px;background:#4cc2ff;border-radius:2.5px;"></div>
<svg class="r" style="left:589px;top:415.0px;" width="12" height="12" viewBox="0 0 12 12"><path d="M3.1 6.4 L5.1 8.3 L8.9 4.4" stroke="#0d1b26" stroke-width="1.1" fill="none"/></svg>
<div class="t" style="left:606.10px;top:415.91px;font-size:17.442px;color:#ebebeb;font-weight:400;transform:scale(0.4899,0.5);">Selection info</div>
<div class="t" style="left:716.70px;top:416.31px;font-size:17.442px;color:#c8c8c8;font-weight:400;transform:scale(0.4818,0.5);">selected</div>
<div class="r" style="left:589px;top:440.2px;width:81px;height:19.30000000000001px;background:#363636;border-radius:3px;"></div>
<div class="t" style="left:597.80px;top:445.01px;font-size:17.442px;color:#ebebeb;font-weight:400;transform:scale(0.4813,0.5);">Reset to defaults</div>
<div class="r" style="left:675px;top:440.2px;width:80.70000000000005px;height:19.30000000000001px;background:#464646;border-radius:3px;"></div>
<div class="t" style="left:687.30px;top:445.01px;font-size:17.442px;color:#8a8a8a;font-weight:400;transform:scale(0.4695,0.5);">Save and close</div>
</body></html>
